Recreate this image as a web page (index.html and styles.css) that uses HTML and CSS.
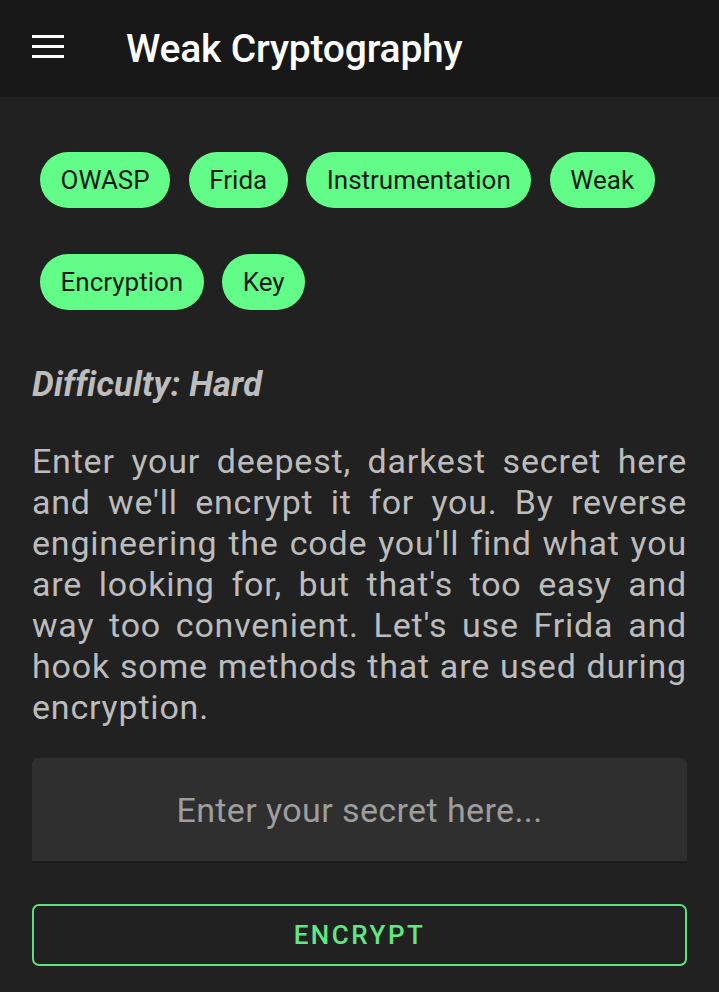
FILE: index.html
```html
<!DOCTYPE html>
<html lang="en">
<head>
<meta charset="utf-8">
<title>Weak Cryptography</title>
<link rel="stylesheet" href="styles.css">
</head>
<body>
<header class="appbar">
  <svg class="menu-icon" width="32" height="24" viewBox="0 0 32 24" aria-hidden="true">
    <rect x="0" y="1" width="32" height="3" fill="#ffffff"/>
    <rect x="0" y="11" width="32" height="3" fill="#ffffff"/>
    <rect x="0" y="21" width="32" height="3" fill="#ffffff"/>
  </svg>
  <h1 class="title">Weak Cryptography</h1>
</header>
<main class="content">
  <div class="chips">
    <span class="chip">OWASP</span>
    <span class="chip">Frida</span>
    <span class="chip">Instrumentation</span>
    <span class="chip">Weak</span>
    <span class="chip">Encryption</span>
    <span class="chip">Key</span>
  </div>
  <p class="difficulty">Difficulty: Hard</p>
  <p class="description">Enter your deepest, darkest secret here and we'll encrypt it for you. By reverse engineering the code you'll find what you are looking for, but that's too easy and way too convenient. Let's use Frida and hook some methods that are used during encryption.</p>
  <div class="field">
    <input class="field-input" type="text" placeholder="Enter your secret here...">
  </div>
  <button class="btn-outline" type="button">ENCRYPT</button>
</main>
</body>
</html>
```
FILE: styles.css
```css
* { box-sizing: border-box; }
html, body {
  margin: 0;
  padding: 0;
  background: #212121;
  font-family: Roboto, "Noto Sans", sans-serif;
}
.appbar {
  height: 97px;
  background: #181818;
  display: flex;
  align-items: center;
  padding-left: 32px;
}
.menu-icon {
  flex: none;
  margin-top: -5px;
}
.title {
  margin: 2px 0 0 62px;
  font-size: 39px;
  font-weight: 500;
  color: #ffffff;
  line-height: 1;
  letter-spacing: -0.2px;
}
.content {
  padding: 55px 32px 0;
}
.chips {
  display: flex;
  flex-wrap: wrap;
  column-gap: 18.5px;
  row-gap: 46px;
  padding: 0 8px;
}
.chip {
  height: 56px;
  padding: 0 20.5px;
  border-radius: 28px;
  background: #62fd88;
  color: #1a1a1a;
  font-size: 26px;
  display: inline-flex;
  align-items: center;
}
.difficulty {
  margin: 54px 0 0;
  font-size: 34.5px;
  font-weight: 700;
  font-style: italic;
  color: #bdbdbd;
  line-height: 40px;
  letter-spacing: 0.2px;
}
.description {
  margin: 37px 0 0;
  font-size: 34px;
  line-height: 41px;
  letter-spacing: 0.8px;
  color: #bcbcbc;
  text-align: justify;
}
.field {
  margin-top: 30px;
  height: 105px;
  background: #2f2f2f;
  border-radius: 6px 6px 0 0;
  border-bottom: 2px solid #1c1c1c;
  display: flex;
}
.field-input {
  flex: 1;
  border: 0;
  background: transparent;
  outline: none;
  text-align: center;
  font-family: inherit;
  font-size: 34px;
  letter-spacing: 0.4px;
  color: #e0e0e0;
  padding: 0;
}
.field-input::placeholder {
  color: #9e9e9e;
}
.btn-outline {
  display: block;
  width: 100%;
  margin-top: 41px;
  height: 62px;
  border: 2px solid #5fe07f;
  border-radius: 7px;
  background: transparent;
  color: #5fe884;
  font-family: inherit;
  font-size: 26px;
  font-weight: 500;
  letter-spacing: 2.5px;
}
```
